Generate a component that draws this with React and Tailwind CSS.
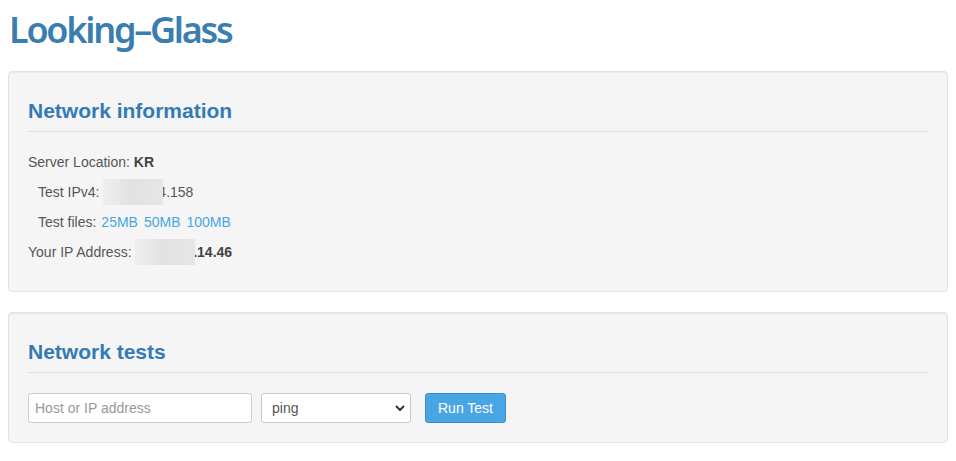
import React from "react";

function Blur({ className }) {
  return (
    <span
      className={`relative z-10 inline-block align-middle bg-gradient-to-r from-[#eeeeee] via-[#e2e2e2] to-[#e6e6e6] ${className}`}
    />
  );
}

function Well({ title, children }) {
  return (
    <div className="bg-[#f5f5f5] border border-[#e3e3e3] rounded-[4px] shadow-[inset_0_1px_1px_rgba(0,0,0,0.05)] px-[19px] pb-[19px]">
      <h2 className="text-[21px] leading-[1.1] font-bold text-[#337ab7] mt-[27px] pb-[9px] border-b border-[#e0e0e0]">
        {title}
      </h2>
      {children}
    </div>
  );
}

export default function App() {
  return (
    <div className="min-h-screen bg-white font-['Liberation_Sans',Arial,sans-serif] text-[14px] text-[#555]">
      <div className="px-2">
        <h1 className="font-['Noto_Sans',sans-serif] font-semibold text-[36px] leading-none tracking-[-2.25px] text-[#3a7eb0] pl-[1px] pt-[12px] pb-[23px]">
          Looking–Glass
        </h1>

        <Well title="Network information">
          <div className="pt-[15px] pb-[5px] flex flex-col">
            <div className="h-[30px] flex items-center">
              Server Location:&nbsp;<b className="text-[#444]">KR</b>
            </div>
            <div className="h-[30px] flex items-center pl-[10px]">
              Test IPv4:&nbsp;
              <Blur className="w-[60px] h-[26px]" />
              <span className="-ml-[5px]">4.158</span>
            </div>
            <div className="h-[30px] flex items-center pl-[10px] gap-[6px]">
              <span>Test files:</span>
              <a className="text-[#47a7e6] -ml-[1px]">25MB</a>
              <a className="text-[#47a7e6]">50MB</a>
              <a className="text-[#47a7e6]">100MB</a>
            </div>
            <div className="h-[30px] flex items-center">
              Your IP Address:&nbsp;
              <Blur className="w-[60px] h-[26px]" />
              <b className="text-[#444] -ml-[10px]">1.14.46</b>
            </div>
          </div>
        </Well>

        <div className="h-[20px]" />

        <Well title="Network tests">
          <div className="pt-[20px] flex items-center">
            <input
              placeholder="Host or IP address"
              className="w-[224px] h-[30px] bg-white border border-[#cccccc] rounded-[3px] px-[6px] text-[14px] text-[#555] placeholder:text-[#999] outline-none"
            />
            <div className="relative ml-[9px]">
              <select className="appearance-none w-[150px] h-[30px] bg-white border border-[#cccccc] rounded-[3px] px-[10px] text-[14px] text-[#555] outline-none">
                <option>ping</option>
              </select>
              <svg
                className="absolute right-[6px] top-[11px] w-[10px] h-[8px] pointer-events-none"
                viewBox="0 0 10 8"
                fill="none"
                stroke="#333"
                strokeWidth="2"
              >
                <path d="M1 2l4 4 4-4" />
              </svg>
            </div>
            <button className="ml-[14px] w-[81px] h-[30px] bg-[#4aa5e5] border border-[#3a8fcc] rounded-[3px] text-white text-[14px]">
              Run Test
            </button>
          </div>
        </Well>
      </div>
    </div>
  );
}
